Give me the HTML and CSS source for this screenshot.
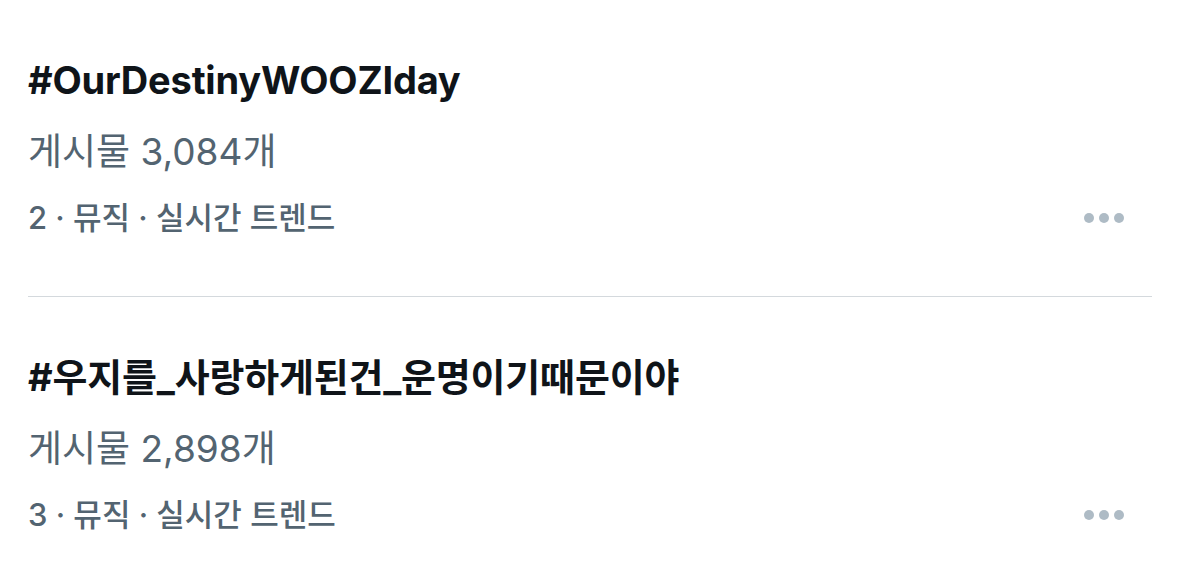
FILE: index.html
```html
<!DOCTYPE html>
<html lang="ko">
<head>
  <meta charset="UTF-8">
  <meta name="viewport" content="width=device-width, initial-scale=1">
  <link rel="stylesheet" href="styles.css">
</head>
<body>

<!-- Trend list -->
<ul class="trends">
  <li class="trend">
    <div class="trend-title">#OurDestinyWOOZIday</div>
    <div class="trend-count">게시물 3,084개</div>
    <div class="trend-meta">
      <span>2 · 뮤직 · 실시간 트렌드</span>
      <span class="more"><i></i><i></i><i></i></span>
    </div>
  </li>
  <li class="trend">
    <div class="trend-title">#우지를_사랑하게된건_운명이기때문이야</div>
    <div class="trend-count">게시물 2,898개</div>
    <div class="trend-meta">
      <span>3 · 뮤직 · 실시간 트렌드</span>
      <span class="more"><i></i><i></i><i></i></span>
    </div>
  </li>
</ul>

</body>
</html>
```

FILE: styles.css
```css
body {
  margin: 0;
  background: #fff;
  font-family: Inter, "Noto Sans CJK KR", sans-serif;
  color: #0f1419;
}

* {
  box-sizing: border-box;
}

.trends {
  margin: 0;
  padding: 0 27px 0 28px;
  list-style-type: none;
}

.trend {
  padding: 56px 0 56px;
  border-bottom: 1px solid #d4d9dd;
}

.trend:last-child {
  border-bottom: none;
}

.trend-title {
  font-size: 38px;
  font-weight: 700;
  line-height: 48px;
  letter-spacing: -0.2px;
}

.trend-count {
  margin-top: 24px;
  font-size: 37px;
  line-height: 48px;
  color: #536471;
}

.trend-meta {
  margin-top: 20px;
  display: flex;
  align-items: center;
  justify-content: space-between;
  font-size: 31px;
  font-weight: 500;
  line-height: 44px;
  color: #536471;
}

.more {
  display: flex;
  gap: 5px;
  margin-right: 28px;
}

.more i {
  width: 10px;
  height: 10px;
  border-radius: 50%;
  background: #aebbc5;
}
```
